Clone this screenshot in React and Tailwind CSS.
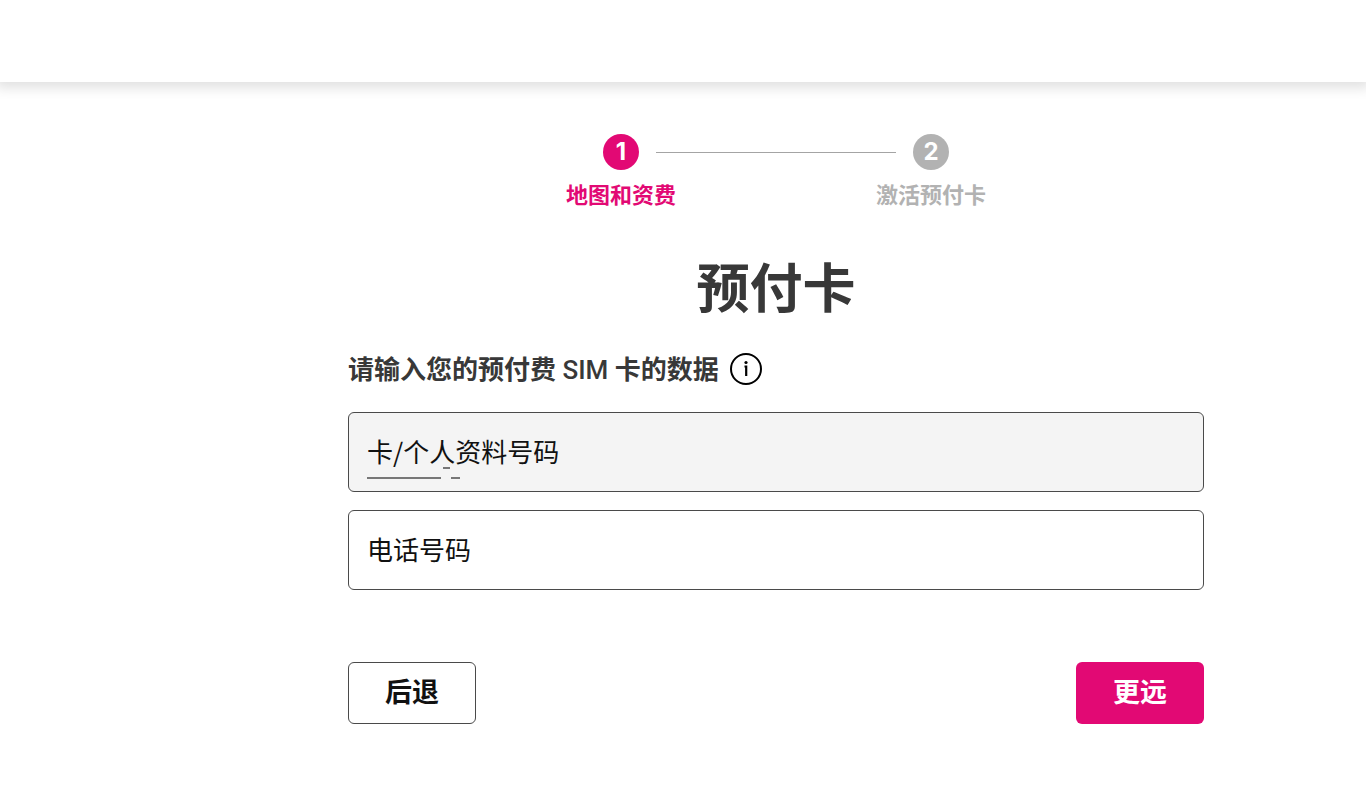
import React, { useState } from "react";

const steps = [
  { number: 1, title: "地图和资费" },
  { number: 2, title: "激活预付卡" },
];

function Step({ number, title, active }) {
  return (
    <li
      aria-current={active ? "step" : undefined}
      className={`flex flex-col items-center gap-2 ${active ? "text-[#e20974]" : "text-[#b2b2b2]"}`}
    >
      <span
        className={`flex size-9 items-center justify-center rounded-full font-['Inter'] text-2xl font-bold text-white ${
          active ? "bg-[#e20974]" : "bg-[#b2b2b2]"
        }`}
      >
        {number}
      </span>
      <span className="text-[22px] leading-[30px] font-bold whitespace-nowrap">{title}</span>
    </li>
  );
}

function Stepper({ current }) {
  return (
    <ol className="flex justify-center">
      <Step {...steps[0]} active={current === 1} />
      <li aria-hidden="true" className="-mx-5 mt-[18px] h-px w-60 bg-[#a4a4a4]" />
      <Step {...steps[1]} active={current === 2} />
    </ol>
  );
}

function Field({ id, label, value, onChange, filled, children }) {
  return (
    <div
      className={`relative flex h-20 items-center gap-4 rounded-md border border-[#4a4a4a] px-[18px] ${
        filled ? "bg-[#f4f4f4]" : "bg-white"
      }`}
    >
      <label htmlFor={id} className="shrink-0 pb-0.5 text-[26px] leading-10 text-[#111111]">
        {label}
      </label>
      <input
        id={id}
        type="text"
        inputMode="numeric"
        value={value}
        onChange={onChange}
        className="h-full min-w-0 flex-1 bg-transparent text-[26px] outline-none"
      />
      {children}
    </div>
  );
}

// Digit mask under the card number label
function NumberMask() {
  return (
    <svg
      aria-hidden="true"
      className="pointer-events-none absolute bottom-[11px] left-[18px]"
      width="94"
      height="14"
      fill="#777777"
    >
      <rect x="0" y="11" width="74" height="2" />
      <rect x="76" y="1" width="7" height="2" />
      <rect x="84" y="11" width="9" height="2" />
    </svg>
  );
}

function App() {
  const [cardNumber, setCardNumber] = useState("");
  const [phoneNumber, setPhoneNumber] = useState("");

  return (
    <div
      lang="zh-CN"
      className="min-h-screen overflow-x-hidden bg-white font-['Noto_Sans_CJK_SC',sans-serif] text-[#383838]"
    >
      <header className="h-[82px] bg-white shadow-[0_2px_12px_4px_rgba(0,0,0,0.12)]" />
      <main className="pt-[52px] pl-[186px]">
        <div className="mx-auto max-w-[856px]">
          <Stepper current={1} />

          <h1 className="mt-[37px] text-center text-[53px] leading-20 font-bold">预付卡</h1>

          <form onSubmit={(e) => e.preventDefault()}>
            <div className="mt-[23px] flex items-center gap-2.5">
              <h2 className="text-[26px] leading-10 font-bold">
                请输入您的预付费
                <span className="font-['Roboto'] font-medium"> SIM </span>
                卡的数据
              </h2>
              <button type="button" aria-label="信息" className="text-black">
                <svg width="34" height="34" viewBox="0 0 34 34" fill="none">
                  <circle cx="17" cy="17" r="15" stroke="currentColor" strokeWidth="2" />
                  <circle cx="17" cy="10.5" r="1.6" fill="currentColor" />
                  <path d="M15.5 14.5H17.2V24" stroke="currentColor" strokeWidth="2.2" />
                </svg>
              </button>
            </div>

            <div className="mt-[22px] flex flex-col gap-[18px]">
              <Field
                id="card-number"
                label="卡/个人资料号码"
                value={cardNumber}
                onChange={(e) => setCardNumber(e.target.value)}
                filled
              >
                <NumberMask />
              </Field>
              <Field
                id="phone-number"
                label="电话号码"
                value={phoneNumber}
                onChange={(e) => setPhoneNumber(e.target.value)}
              />
            </div>

            <div className="mt-[72px] flex justify-between text-[27px] leading-10 font-bold">
              <button
                type="button"
                className="h-[62px] w-32 rounded-md border border-[#4a4a4a] bg-white pb-1 text-[#111111]"
              >
                后退
              </button>
              <button type="submit" className="h-[62px] w-32 rounded-md bg-[#e20974] pb-1 text-white">
                更远
              </button>
            </div>
          </form>
        </div>
      </main>
    </div>
  );
}

export default App;
